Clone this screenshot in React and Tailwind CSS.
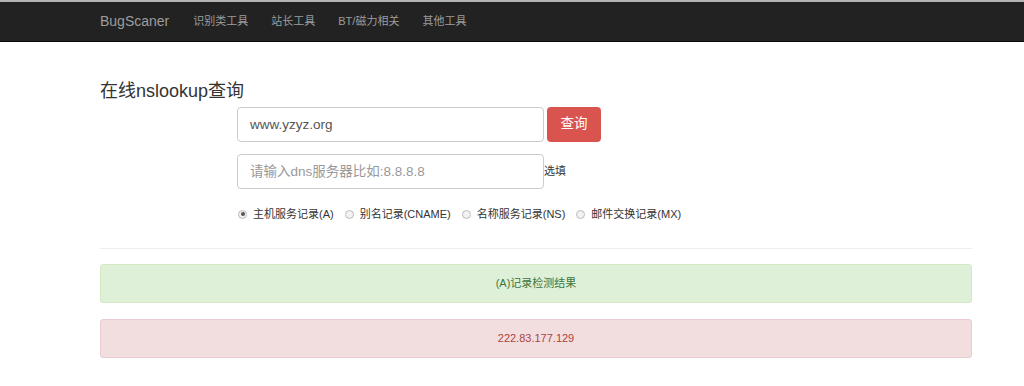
import { useState } from "react";

const font = "font-['Liberation_Sans','Noto_Sans_CJK_SC',sans-serif]";

export default function App() {
  const [type, setType] = useState("A");

  const records = [
    { id: "A", label: "主机服务记录(A)", gap: "mr-[10px]" },
    { id: "CNAME", label: "别名记录(CNAME)", gap: "mr-[10px]" },
    { id: "NS", label: "名称服务记录(NS)", gap: "mr-[10px]" },
    { id: "MX", label: "邮件交换记录(MX)", gap: "" },
  ];

  return (
    <div className={`min-h-[386px] bg-white text-[#333] ${font}`}>
      {/* NAVBAR */}
      <div className="h-[42px] border-t-2 border-[#b4b4b4] border-b border-b-[#080808] bg-[#222]">
        <div className="ml-[100px] flex h-full items-center text-[#9d9d9d]">
          <span className="mr-[24px] text-[14px]">BugScaner</span>
          <span className="mr-[23px] text-[11px]">识别类工具</span>
          <span className="mr-[23px] text-[11px]">站长工具</span>
          <span className="mr-[23px] text-[11px]">BT/磁力相关</span>
          <span className="text-[11px]">其他工具</span>
        </div>
      </div>

      <div className="ml-[100px] w-[872px]">
        {/* TITLE */}
        <h3 className="mt-[38px] text-[18px] leading-[22px]">在线nslookup查询</h3>

        {/* FORM */}
        <div className="ml-[137px] mt-[5px]">
          <div className="flex items-center">
            <input
              defaultValue="www.yzyz.org"
              className="h-[35px] w-[307px] rounded-[4px] border border-[#ccc] px-[12px] text-[13.5px] text-[#555] outline-none"
            />
            <button className="ml-[3px] h-[35px] w-[54px] rounded-[4px] bg-[#d9534f] text-[13.5px] text-white">
              查询
            </button>
          </div>

          <div className="mt-[12px] flex items-center">
            <input
              placeholder="请输入dns服务器比如:8.8.8.8"
              className="h-[35px] w-[307px] rounded-[4px] border border-[#ccc] px-[12px] text-[13.5px] text-[#555] outline-none placeholder:text-[#999]"
            />
            <span className="text-[11px]">选填</span>
          </div>

          <div className="mt-[17px] flex items-center text-[11px]">
            {records.map((r) => (
              <label key={r.id} className={`flex items-center ${r.gap}`}>
                <span
                  onClick={() => setType(r.id)}
                  className="ml-[1px] mr-[6px] flex h-[9px] w-[9px] items-center justify-center rounded-full border border-[#bbb] bg-[#f2f2f2]"
                >
                  {type === r.id && <span className="h-[4px] w-[4px] rounded-full bg-[#555]" />}
                </span>
                {r.label}
              </label>
            ))}
          </div>
        </div>

        <div className="mt-[25px] border-t border-[#eee]" />

        {/* RESULTS */}
        <div className="mt-[15px] flex h-[39px] items-center justify-center rounded-[3px] border border-[#d6e9c6] bg-[#dff0d8] text-[11px] text-[#3c763d]">
          (A)记录检测结果
        </div>
        <div className="mt-[16px] flex h-[39px] items-center justify-center rounded-[3px] border border-[#ebccd1] bg-[#f2dede] text-[11px] text-[#a94442]">
          222.83.177.129
        </div>
      </div>
    </div>
  );
}
